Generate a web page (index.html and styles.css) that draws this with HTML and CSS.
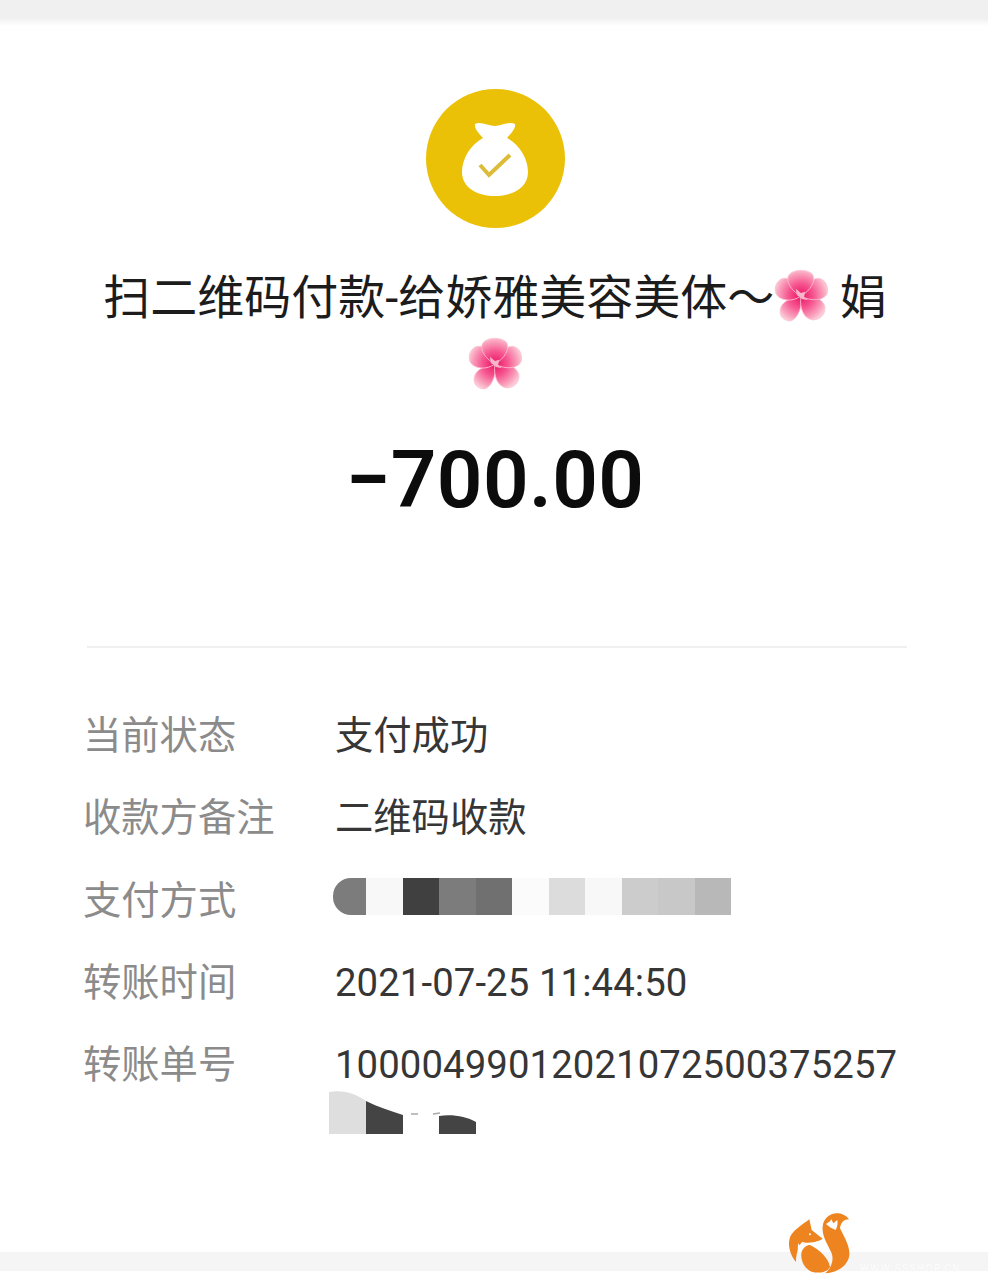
FILE: index.html
```html
<!DOCTYPE html>
<html lang="zh-CN">
<head>
<meta charset="UTF-8">
<meta name="viewport" content="width=device-width, initial-scale=1.0">
<title>账单详情</title>
<link rel="stylesheet" href="styles.css">
</head>
<body>
<svg width="0" height="0" class="defs">
    <defs>
        <radialGradient id="petal" gradientUnits="userSpaceOnUse" cx="26" cy="26" r="27">
            <stop offset="0" stop-color="#ea1264"/>
            <stop offset="0.45" stop-color="#f65690"/>
            <stop offset="0.8" stop-color="#f9a0bc"/>
            <stop offset="1" stop-color="#fbd0da"/>
        </radialGradient>
        <filter id="soft">
            <feGaussianBlur stdDeviation="0.5"/>
        </filter>
        <symbol id="flower" viewBox="0 0 52 52">
            <g filter="url(#soft)" fill="url(#petal)" stroke="#fbc4d3" stroke-width="0.8">
                <path d="M26 26C28 33 24 48 16 50 8 50 5 44 6 39c1-7 10-12 20-13z"/>
                <path d="M26 26c-8 6-20 5-24-2C-1 17 4 9 10 9c8-1 14 7 16 17z"/>
                <path d="M26 26c9-2 20 1 23 10 1 8-5 13-12 13-8-1-13-11-11-23z"/>
                <path d="M26 26c2-9 9-17 17-17 7 1 10 9 8 15-3 6-14 8-25 2z"/>
                <path d="M26 26C16 21 10 10 15 5c5-5 17-5 22 0 4 6-2 16-11 21z"/>
            </g>
            <path d="M21 19l5 4 4-1-1 5 4 3-6-1-5-4z" fill="#f8b4c8" filter="url(#soft)"/>
        </symbol>
    </defs>
</svg>

<div class="top-bar"></div>

<div class="card">
    <div class="head">
        <div class="pay-icon">
            <svg width="66" height="76" viewBox="0 0 66 76">
                <path d="M13 3C18 0 27 5 33 5 39 5 48 0 53 3 54 8 48 13 45 17 58 24 66 38 66 51 66 67 50 75 33 75 16 75 0 67 0 51 0 38 8 24 21 17 18 13 12 8 13 3z" fill="#fff"/>
                <path d="M18 44l9 10 21-20" fill="none" stroke="#dcbb38" stroke-width="4"/>
            </svg>
        </div>
        <h1 class="title">扫二维码付款-给娇雅美容美体～<svg class="flower"><use href="#flower"/></svg> 娟<br><svg class="flower"><use href="#flower"/></svg></h1>
        <div class="amount">−700.00</div>
    </div>

    <div class="divider"></div>

    <div class="rows">
        <div class="row">
            <span class="label">当前状态</span>
            <span class="value">支付成功</span>
        </div>
        <div class="row">
            <span class="label">收款方备注</span>
            <span class="value">二维码收款</span>
        </div>
        <div class="row">
            <span class="label">支付方式</span>
            <div class="mosaic">
                <i class="m-first"></i>
                <i class="m-f8"></i>
                <i class="m-40"></i>
                <i class="m-7c"></i>
                <i class="m-70"></i>
                <i class="m-fa"></i>
                <i class="m-dc"></i>
                <i class="m-f8"></i>
                <i class="m-cc"></i>
                <i class="m-c8"></i>
                <i class="m-b8"></i>
            </div>
        </div>
        <div class="row">
            <span class="label">转账时间</span>
            <span class="value num">2021-07-25 11:44:50</span>
        </div>
        <div class="row row-last">
            <span class="label">转账单号</span>
            <div class="value num">
                <div>10000499012021072500375257</div>
                <svg class="mosaic-tail" width="148" height="46" viewBox="0 0 148 46">
                    <path d="M0 3c12-2 24 0 37 9v33H0z" fill="#dedede"/>
                    <path d="M37 12c12 6 25 10 37 14v19H37z" fill="#444"/>
                    <path d="M82 25h7M104 25l7-1" stroke="#aaa" stroke-width="1.5"/>
                    <path d="M110 27c12-2 27 0 37 6v12h-37z" fill="#444"/>
                </svg>
            </div>
        </div>
    </div>
</div>

<div class="bottom-bar"></div>

<div class="watermark">
    <svg width="218" height="80" viewBox="0 0 654 240">
        <path d="M118 58L125 90 158 116C145 125 125 128 108 128 90 132 78 150 78 186 60 165 52 135 60 112 68 92 95 75 118 58z" fill="#ee8420"/>
        <path d="M84 130l5 6 7-10 12 2c-10 4-17 11-21 20l-4 6z" fill="#fff"/>
        <path d="M120 135C150 150 175 175 180 200 175 215 150 222 125 215 100 205 90 175 95 155 100 143 110 135 120 135z" fill="#ee8420"/>
        <path d="M158 80C160 55 180 38 205 40 220 42 232 50 237 58 222 58 212 68 210 85 225 115 240 140 238 165 235 195 205 218 165 220 185 205 192 180 185 160 175 135 155 110 158 80z" fill="#ee8420"/>
        <path d="M168 72l12-8 4-6 6 12 12-10c2 10 0 20-5 30-11-4-21-10-29-18z" fill="#fff"/>
        <circle cx="120" cy="103" r="3" fill="#fff"/>
    </svg>
    <span class="wm-text">WWW.SSSHOP.CN</span>
</div>
</body>
</html>
```

FILE: styles.css
```css
* {
    box-sizing: border-box;
    font-family: "Roboto", "Noto Sans CJK SC", sans-serif;
}
html, body {
    margin: 0;
    padding: 0;
}
body {
    position: relative;
    height: 1280px;
    background: #fff;
    overflow: hidden;
}
.defs {
    display: block;
    height: 0;
}
.top-bar {
    height: 26px;
    background: linear-gradient(#f0f0f0 70%, #fff);
}
.card {
    height: 1226px;
    background: #fff;
    padding-top: 63px;
}
.bottom-bar {
    height: 19px;
    background: #f5f5f5;
}

.head {
    display: flex;
    flex-direction: column;
    align-items: center;
    padding-left: 2px;
}
.pay-icon {
    width: 139px;
    height: 139px;
    border-radius: 50%;
    background: #ebc108;
    display: flex;
    align-items: center;
    justify-content: center;
}
.title {
    margin: 36px 0 0;
    width: 820px;
    text-align: center;
    font-size: 47px;
    line-height: 68px;
    font-weight: 400;
    color: #1c1c1c;
}
.flower {
    width: 54px;
    height: 54px;
    vertical-align: -9px;
}
.amount {
    margin-top: 30px;
    height: 100px;
    line-height: 100px;
    font-size: 80px;
    font-weight: 600;
    color: #0c0c0c;
    letter-spacing: 0.4px;
}
.divider {
    margin: 116px 81px 0 87px;
    border-top: 2px solid #f0f0f0;
}

.rows {
    margin-top: 47px;
    padding-left: 83px;
}
.row {
    display: flex;
    height: 82.3px;
    align-items: center;
    font-size: 38.3px;
    line-height: 44px;
}
.row-last {
    align-items: flex-start;
    padding-top: 19px;
}
.label {
    width: 252px;
    flex: none;
    color: #8b8b8b;
}
.value {
    color: #363636;
}
.num {
    letter-spacing: 0.1px;
}
.mosaic {
    display: flex;
    margin: 0 0 8px -2px;
    height: 37px;
}
.mosaic i {
    display: block;
    width: 36.5px;
    height: 37px;
}
.mosaic .m-first {
    background: #7c7c7c;
    border-radius: 18px 0 0 18px / 18px 0 0 18px;
    width: 33px;
}
.m-f8 { background: #f8f8f8; }
.m-40 { background: #404040; }
.m-7c { background: #7c7c7c; }
.m-70 { background: #707070; }
.m-fa { background: #fbfbfb; }
.m-dc { background: #dcdcdc; }
.m-cc { background: #cccccc; }
.m-c8 { background: #c8c8c8; }
.m-b8 { background: #b8b8b8; }
.mosaic-tail {
    display: block;
    margin: 2px 0 0 -6px;
}

.watermark {
    position: absolute;
    left: 770px;
    top: 1200px;
    width: 218px;
    height: 80px;
}
.watermark svg {
    display: block;
}
.wm-text {
    position: absolute;
    left: 90px;
    top: 63px;
    font-size: 10px;
    letter-spacing: 1.5px;
    color: #fcfcfc;
    white-space: nowrap;
}
```
